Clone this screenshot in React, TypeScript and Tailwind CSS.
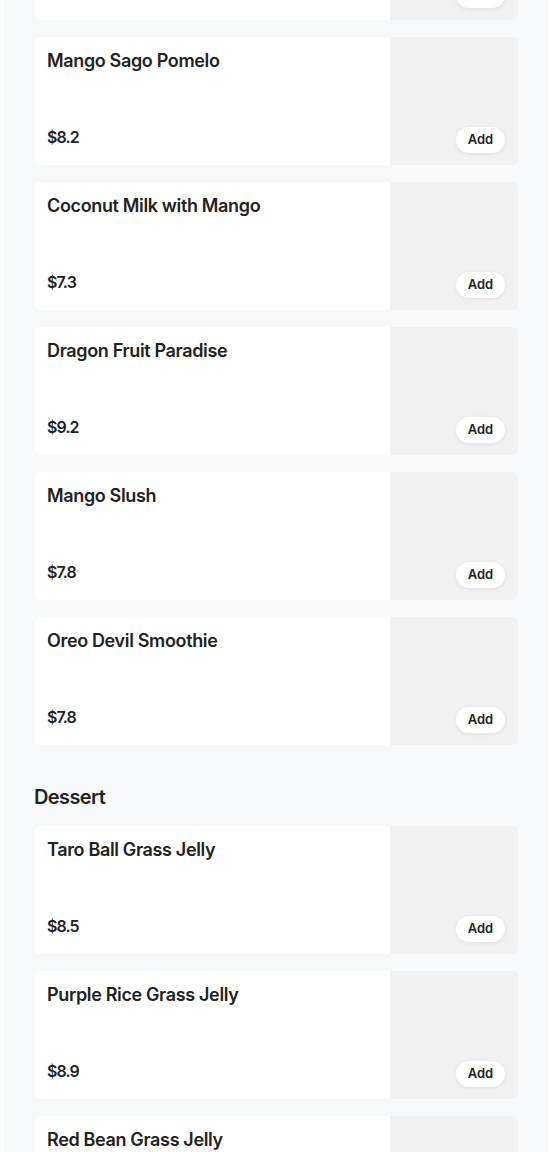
import React from "react";

type Item = { name: string; price: string };

const drinks: Item[] = [
  { name: "Passion Fruit Tea", price: "$7.5" },
  { name: "Mango Sago Pomelo", price: "$8.2" },
  { name: "Coconut Milk with Mango", price: "$7.3" },
  { name: "Dragon Fruit Paradise", price: "$9.2" },
  { name: "Mango Slush", price: "$7.8" },
  { name: "Oreo Devil Smoothie", price: "$7.8" },
];

const desserts: Item[] = [
  { name: "Taro Ball Grass Jelly", price: "$8.5" },
  { name: "Purple Rice Grass Jelly", price: "$8.9" },
  { name: "Red Bean Grass Jelly", price: "$8.5" },
];

function Card({ item }: { item: Item }) {
  return (
    <div className="flex h-[128px] shrink-0 overflow-hidden rounded-[5px] bg-white">
      <div className="flex flex-1 flex-col justify-between pl-[12px] pr-3 pt-[12px] pb-[18px]">
        <div className="text-[18px] leading-[24px] font-semibold text-[#222222] tracking-[-0.35px]">
          {item.name}
        </div>
        <div className="text-[16px] leading-[20px] font-semibold text-[#222222] tracking-[-0.9px]">
          {item.price}
        </div>
      </div>
      <div className="relative h-[128px] w-[128px] shrink-0 bg-[#f1f1f1]">
        <button className="absolute right-[13px] bottom-[12px] flex h-[26px] w-[49px] items-center justify-center rounded-full bg-white text-[13px] font-semibold text-[#222222] shadow-[0_1px_4px_rgba(0,0,0,0.08)]">
          Add
        </button>
      </div>
    </div>
  );
}

export default function App() {
  return (
    <div className="h-[1152px] w-[550px] overflow-hidden bg-white" style={{ fontFamily: "Inter, 'Noto Sans', sans-serif" }}>
      <div className="ml-[4px] mr-[2px] h-[1152px] overflow-hidden bg-[#f7f8fa] pl-[31px] pr-[30px]">
        <div className="-mt-[108px] flex flex-col gap-[17px]">
          {drinks.map((d) => (
            <Card key={d.name} item={d} />
          ))}
        </div>
        <div className="mt-[38px] mb-[15px] -ml-[1px] text-[20px] leading-[28px] font-semibold text-[#222222] tracking-[-0.6px]">
          Dessert
        </div>
        <div className="flex flex-col gap-[17px]">
          {desserts.map((d) => (
            <Card key={d.name} item={d} />
          ))}
        </div>
      </div>
    </div>
  );
}
